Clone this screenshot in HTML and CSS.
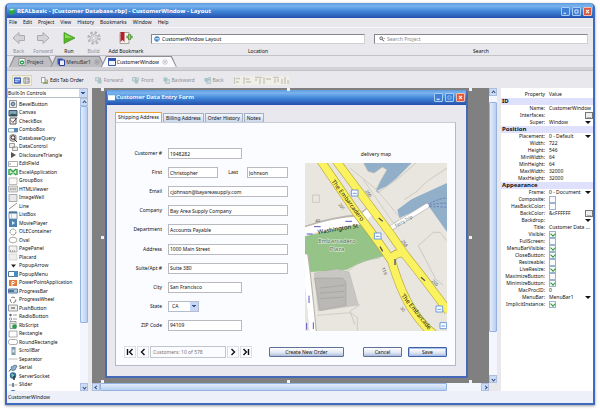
FILE: index.html
```html
<!DOCTYPE html>
<html lang="en">
<head>
    <meta charset="UTF-8">
    <meta name="viewport" content="width=device-width, initial-scale=1.0">
    <title>REALbasic - [Customer Database.rbp] - CustomerWindow - Layout</title>
    <link rel="stylesheet" href="styles.css">
</head>
<body>
<div class="app">
    <header class="titlebar main-title">
        <svg class="title-icon" viewBox="0 0 8 8"><path d="M1 1.500 5 .5 7.500 2v4.500L3.500 7.800 1 6z" fill="#28a745"/><path d="M1 1.500 5 .5 7.500 2 3.500 3z" fill="#b5f0b0"/></svg>
        <h1>REALbasic - [Customer Database.rbp] - CustomerWindow - Layout</h1>
        <div class="win-buttons">
            <button aria-label="Minimize"><svg viewBox="0 0 9 9"><path d="M2 6h3v1.500H2z" fill="#fff"/></svg></button>
            <button aria-label="Maximize"><svg viewBox="0 0 9 9"><path d="M2.500 2.500h4v4h-4z" fill="none" stroke="#fff"/></svg></button>
            <button class="close" aria-label="Close"><svg viewBox="0 0 9 9"><path d="m2.500 2.500 4 4m0-4-4 4" stroke="#fff" stroke-width="1.300"/></svg></button>
        </div>
    </header>

    <nav class="menubar">
        <button>File</button><button>Edit</button><button>Project</button><button>View</button><button>History</button><button>Bookmarks</button><button>Window</button><button>Help</button>
    </nav>

    <div class="toolbar">
        <button class="tool back off"><svg viewBox="0 0 14 14"><path d="M1 7 7 1.500v3h5.500v5H7v3z" fill="#d3d3d8" stroke="#aaaab0"/></svg>Back</button>
        <button class="tool forward off"><svg viewBox="0 0 14 14"><path d="m13 7-6-5.500v3H1.500v5H7v3z" fill="#d3d3d8" stroke="#aaaab0"/></svg>Forward</button>
        <button class="tool run"><svg viewBox="0 0 14 14"><path d="M2 1.500 13 7 2 12.500z" fill="#58b82c" stroke="#3b8f1a" stroke-width=".7"/><path d="M3 3 10 6.700 3 7z" fill="#8cdc55"/></svg>Run</button>
        <button class="tool build off"><svg viewBox="0 0 14 14"><circle cx="7" cy="7" r="5.500" fill="none" stroke="#b4b4ba" stroke-width="2.400" stroke-dasharray="2.400 1.900"/><circle cx="7" cy="7" r="3.500" fill="#e4e4e8" stroke="#b4b4ba"/><circle cx="7" cy="7" r="1.500" fill="#fff" stroke="#b4b4ba" stroke-width=".7"/></svg>Build</button>
        <button class="tool bookmark"><svg viewBox="0 0 14 14"><path d="M1 1.500h9v11H1z" fill="#f5f3ee" stroke="#8c8378" stroke-width=".7"/><path d="M1.500 1h4v10l-2-2-2 2z" fill="#b3202a"/><path d="M10.500 3v6m-3-3h6" stroke="#3c7d24" stroke-width="2.400"/><path d="M10.500 3.500v5M8 6h5" stroke="#9ada64"/></svg>Add Bookmark</button>
        <div class="field-group">
            <div class="box"><svg viewBox="0 0 8 8"><circle cx="4" cy="4" r="3.300" fill="#3f8bd0" stroke="#2864a4" stroke-width=".6"/><path d="M1.500 3h5v1.200h-5zM4.500 5h2l-1 1.500z" fill="#e8f4ff"/></svg><input id="location" type="text" value="CustomerWindow Layout"></div>
            <label for="location">Location</label>
        </div>
        <div class="field-group">
            <div class="box search"><svg viewBox="0 0 8 8"><circle cx="3" cy="3" r="2" fill="#ddd" stroke="#555"/><path d="m4.500 4.500 2 2.500" stroke="#444" stroke-width="1.300"/><path d="M6 2.500h2L7 4z" fill="#666"/></svg><input id="search" type="text" placeholder="Search Project"></div>
            <label for="search">Search</label>
        </div>
    </div>

    <div class="tabs">
        <button class="tab project"><span><svg viewBox="0 0 8 8"><path d="M1 .5h6v7H1z" fill="#fff" stroke="#666" stroke-width=".6"/><circle cx="4" cy="4.500" r="2.300" fill="#2fa853"/><path d="M3 4.500h2" stroke="#fff"/></svg>Project</span></button>
        <button class="tab menu"><span><svg viewBox="0 0 8 8"><path d="M.5.5h5v6h-5z" fill="#3955b8"/><path d="M2.500 2h5v5.500h-5z" fill="#eef" stroke="#2540a0"/></svg>MenuBar1<svg class="x" viewBox="0 0 8 8"><circle cx="4" cy="4" r="3" fill="none" stroke="#888" stroke-width=".7"/><path d="m3 3 2 2m0-2L3 5" stroke="#777" stroke-width=".7"/></svg></span></button>
        <button class="tab active"><span><svg viewBox="0 0 8 8"><path d="M.5.5h7v7h-7z" fill="#f2f6ff" stroke="#3955b0"/><path d="M0 0h8v3H0z" fill="#3355b5"/></svg>CustomerWindow<svg class="x" viewBox="0 0 8 8"><circle cx="4" cy="4" r="3" fill="none" stroke="#999" stroke-width=".7"/><path d="m3 3 2 2m0-2L3 5" stroke="#888" stroke-width=".7"/></svg></span></button>
    </div>

    <div class="toolrow">
        <div class="modes">
            <button class="on" aria-label="Layout view"><svg viewBox="0 0 8 8"><path d="M.5 1h7v6h-7z" fill="#5d86dd" stroke="#2346a2"/><path d="M1 3h6M1 5h3" stroke="#fff" stroke-width=".8"/></svg></button>
            <button aria-label="Code view"><svg viewBox="0 0 8 8"><path d="M1 1h6v6H1z" fill="#eee" stroke="#666" stroke-width=".8"/><path d="M3 1v6M4 3h3M4 5h3" stroke="#777" stroke-width=".7"/></svg></button>
        </div>
        <button class="act edit"><svg viewBox="0 0 8 8"><path d="M.5.5h4v6h-4zM4.500 3.500h3v4h-5" fill="#fff" stroke="#777" stroke-width=".8"/><path d="M4 5h3v2H4z" fill="#7fa844"/></svg>Edit Tab Order</button>
        <button class="act off"><svg viewBox="0 0 8 8"><path d="M.5.5h4v4h-4z" fill="#cfdfe2" stroke="#9fb4ba" stroke-width=".7"/><path d="M3 3h4.500v4.500H3z" fill="#a8c4c8"/><path d="M6 .500v3M5 2h2" stroke="#9ab"/></svg>Forward</button>
        <button class="act off"><svg viewBox="0 0 8 8"><path d="M.5.5h4v4h-4zM4 1h3.500v3H4z" fill="#cfdfe2" stroke="#9fb4ba" stroke-width=".7"/><path d="M3 3h4v4.500H3z" fill="#a8c4c8"/></svg>Front</button>
        <button class="act off"><svg viewBox="0 0 8 8"><path d="M3 3h4.500v4.500H3z" fill="#cfdfe2" stroke="#9fb4ba" stroke-width=".7"/><path d="M.5.5h4.500v4.500H.5z" fill="#a8c4c8"/></svg>Backward</button>
        <button class="act off"><svg viewBox="0 0 8 8"><path d="M3 3h4.500v4.500H3zM5 .5h2.500V3H5z" fill="#cfdfe2" stroke="#9fb4ba" stroke-width=".7"/><path d="M.5 1H5v4.500H.5z" fill="#a8c4c8"/></svg>Back</button>
        <svg class="aligns" viewBox="0 0 56 9"><path d="M1.500 1v7M3 2.500h4M3 6h3M11 1v7M12.500 3h4M13 6h5M22 1.500h7M23 3v2M27 3v5M31 1v7M33 3h5M40 1.500h6M42 3v4M45 3v3M49 8V3M52 8V1M55 8V4" stroke="#c8c7bb" fill="none" stroke-width="1.400"/></svg>
    </div>

    <main class="main">
        <aside class="palette">
            <div class="combo"><select aria-label="Control set"><option>Built-In Controls</option></select></div>
            <div class="list-wrap">
            <ul class="controls">
                <li><svg viewBox="0 0 10 8"><path d="M1.500.5h7v7h-7z" fill="#eee" stroke="#999"/><circle cx="5" cy="4" r="1.800" fill="#8bb8d8" stroke="#567"/></svg>BevelButton</li>
                <li><svg viewBox="0 0 10 8"><path d="M1 1.500h8v5.500H1z" fill="#7fa6bd" stroke="#456"/><path d="m1 6.500 3-2 5 1v1.500H1z" fill="#355"/></svg>Canvas</li>
                <li><svg viewBox="0 0 10 8"><path d="M2 1h6v6H2z" fill="#fff" stroke="#555"/><path d="m3 3.500 2 2L9 .500" fill="none" stroke="#533"/></svg>CheckBox</li>
                <li><svg viewBox="0 0 10 8"><path d="M.5 2.500h9v3.500h-9z" fill="#f4f8ff" stroke="#8aa"/><path d="M6 2h4v4H6z" fill="#5b88b8"/></svg>ComboBox</li>
                <li><svg viewBox="0 0 10 8"><path d="M2 1.500q3-2 6 0v5q-3 2-6 0z" fill="#ccc" stroke="#666" stroke-width=".7"/><circle cx="5" cy="3.500" r="1.800" fill="#fff" stroke="#433"/><path d="m6 5 3 3" stroke="#433"/></svg>DatabaseQuery</li>
                <li><svg viewBox="0 0 10 8"><path d="M1.500.5h5v4h-5zM4.500 4h5v3.500h-5z" fill="#eee" stroke="#888" stroke-width=".8"/></svg>DataControl</li>
                <li><svg viewBox="0 0 10 8"><path d="m3 1 5 3-5 3z" fill="#555"/></svg>DisclosureTriangle</li>
                <li><svg viewBox="0 0 10 8"><path d="M.5 1.500h9v5h-9z" fill="#fff" stroke="#999" stroke-width=".8"/><path d="M2 3v2" stroke="#777" stroke-width=".7"/></svg>EditField</li>
                <li><svg viewBox="0 0 10 8"><path d="M1 1h8v6H1z" fill="#d8f0d8"/><path d="m2 1 6 6m0-6L2 7M1 1v6M9 1v6" stroke="#36a04a" stroke-width="1.400"/></svg>ExcelApplication</li>
                <li><svg viewBox="0 0 10 8"><path d="M1 1h8v6.500H1z" fill="#fafafa" stroke="#aaa" stroke-width=".8"/></svg>GroupBox</li>
                <li><svg viewBox="0 0 10 8"><path d="M.5 1h9v6h-9z" fill="#ddd" stroke="#aaa" stroke-width=".8"/><path d="M2 4h6" stroke="#777" stroke-dasharray="1 .6"/></svg>HTMLViewer</li>
                <li><svg viewBox="0 0 10 8"><path d="M1 .5h8v7H1z" fill="#e8e8ea" stroke="#999" stroke-width=".8"/></svg>ImageWell</li>
                <li><svg viewBox="0 0 10 8"><path d="m1 7 8-6" stroke="#777" stroke-width=".8"/></svg>Line</li>
                <li><svg viewBox="0 0 10 8"><path d="M1 1h8v7H1z" fill="#f5f8fa" stroke="#789" stroke-width=".8"/><path d="M1 .5h8v2H1z" fill="#47789c"/><path d="M3.500 3v5" stroke="#abc" stroke-width=".7"/></svg>ListBox</li>
                <li><svg viewBox="0 0 10 8"><path d="M1 0h8v8H1z" fill="#4d83ae"/><path d="m4 2 3 2-3 2z" fill="#d8efff"/></svg>MoviePlayer</li>
                <li><svg viewBox="0 0 10 8"><circle cx="5" cy="4" r="3" fill="#fff" stroke="#888" stroke-dasharray="2 .6"/></svg>OLEContainer</li>
                <li><svg viewBox="0 0 10 8"><ellipse cx="5" cy="4" rx="4" ry="2.800" fill="#fff" stroke="#888" stroke-width=".7"/></svg>Oval</li>
                <li><svg viewBox="0 0 10 8"><path d="M1 1h8v6H1z" fill="#f2f2f2" stroke="#999" stroke-width=".7"/><path d="M2 6h6" stroke="#666" stroke-dasharray="1 1"/></svg>PagePanel</li>
                <li><svg viewBox="0 0 10 8"><path d="M1 1h8v6H1z" fill="#eee" stroke="#ccc" stroke-width=".7"/></svg>Placard</li>
                <li><svg viewBox="0 0 10 8"><path d="M3 2.500h5L5.500 5.500z" fill="#222"/></svg>PopupArrow</li>
                <li><svg viewBox="0 0 10 8"><path d="M.5 1.500h9v5h-9z" fill="#fff" stroke="#578"/><path d="M6 1h4v6H6z" fill="#478bc4"/></svg>PopupMenu</li>
                <li><svg viewBox="0 0 10 8"><path d="M1 1h8v6H1z" fill="#e57a38"/><path d="M4 7V2.500h2q1.500 1 0 2H4" fill="none" stroke="#fff"/></svg>PowerPointApplication</li>
                <li><svg viewBox="0 0 10 8"><path d="M.5 2h9v4h-9z" fill="#a8cce0" stroke="#679"/><path d="M1 4h5" stroke="#47789c" stroke-width="2"/></svg>ProgressBar</li>
                <li><svg viewBox="0 0 10 8"><circle cx="5" cy="4" r="2.800" fill="none" stroke="#777" stroke-dasharray="4 1.500"/></svg>ProgressWheel</li>
                <li><svg viewBox="0 0 10 8"><path d="M.5 1h9v6h-9z" fill="#eee" stroke="#888" stroke-width=".8"/><path d="M3 3h4v2H3z" fill="#999"/></svg>PushButton</li>
                <li><svg viewBox="0 0 10 8"><circle cx="2.500" cy="2" r="1.200" fill="#567"/><circle cx="2.500" cy="6" r="1.200" fill="#fff" stroke="#567" stroke-width=".6"/><path d="M5 2h4M5 6h4" stroke="#888" stroke-width=".8"/></svg>RadioButton</li>
                <li><svg viewBox="0 0 10 8"><path d="M2 .5h6v7H2z" fill="#eee" stroke="#777" stroke-width=".7"/><circle cx="6.500" cy="5.500" r="2.300" fill="#2c9b50"/><path d="M3 2.500h4" stroke="#888" stroke-width=".6"/></svg>RbScript</li>
                <li><svg viewBox="0 0 10 8"><path d="M1 1h8v6H1z" fill="#fff" stroke="#888" stroke-width=".7"/></svg>Rectangle</li>
                <li><svg viewBox="0 0 10 8"><rect x=".5" y="1.500" width="9" height="5" rx="2" fill="#fff" stroke="#888" stroke-width=".7"/></svg>RoundRectangle</li>
                <li><svg viewBox="0 0 10 8"><path d="M3.500 0h4v8h-4z" fill="#7d98a8"/><path d="M4.500 2.500h2v3h-2z" fill="#dceaf2"/></svg>ScrollBar</li>
                <li><svg viewBox="0 0 10 8"><path d="M.5 4h9" stroke="#aaa" stroke-width=".8"/></svg>Separator</li>
                <li><svg viewBox="0 0 10 8"><path d="M1 7.500 3 5" stroke="#456"/><path d="m3 3 4-2 2 1-2 4-3 .5z" fill="#8fb2cc" stroke="#467" stroke-width=".7"/></svg>Serial</li>
                <li><svg viewBox="0 0 10 8"><circle cx="5" cy="3.500" r="3.200" fill="#2f6f9e"/><path d="M3 2q2-1 3 1t-2 2" fill="#7fc0a0"/><path d="M6 4v4" stroke="#333" stroke-width="1.500"/></svg>ServerSocket</li>
                <li><svg viewBox="0 0 10 8"><path d="M.5 4h9" stroke="#999" stroke-width=".8"/><path d="M4 2h2v4H4z" fill="#789"/></svg>Slider</li>
                <li><svg viewBox="0 0 10 8"><circle cx="5" cy="4" r="3" fill="#3c62d0"/></svg></li>
            </ul>
            <div class="vscroll left"><button aria-label="Up"><i class="up"></i></button><div class="thumb"></div><button aria-label="Down"><i></i></button></div>
            </div>
        </aside>

        <section class="editor">
            <div class="canvas">
                <div class="form-window">
                    <div class="titlebar">
                        <svg class="title-icon" viewBox="0 0 8 8"><path d="M0 1.500h8v5.500H0z" fill="#fff"/></svg>
                        <h2>Customer Data Entry Form</h2>
                        <div class="win-buttons">
                            <button aria-label="Minimize"><svg viewBox="0 0 9 9"><path d="M2 6h4v1.500H2z" fill="#fff"/></svg></button>
                            <button aria-label="Maximize"><svg viewBox="0 0 9 9"><path d="M2.500 2.500h4v4h-4z" fill="none" stroke="#9cc4f5"/></svg></button>
                            <button class="close" aria-label="Close"><svg viewBox="0 0 9 9"><path d="m2.500 2.500 4 4m0-4-4 4" stroke="#fff" stroke-width="1.300"/></svg></button>
                        </div>
                    </div>
                    <div class="form-body">
                        <div class="form-tabs">
                            <button class="active">Shipping Address</button><button>Billing Address</button><button>Order History</button><button>Notes</button>
                        </div>
                        <form class="panel">
                            <div class="columns">
                                <div class="fields">
                                    <div class="row"><label for="num">Customer #</label><input class="mid" id="num" type="text" value="1948282"></div>
                                    <div class="row"><label for="first">First</label><input class="short" id="first" type="text" value="Christopher"><label class="last" for="last">Last</label><input id="last" type="text" value="Johnson"></div>
                                    <div class="row"><label for="email">Email</label><input id="email" type="text" value="cjohnson@bayareasupply.com"></div>
                                    <div class="row"><label for="company">Company</label><input id="company" type="text" value="Bay Area Supply Company"></div>
                                    <div class="row"><label for="dept">Department</label><input id="dept" type="text" value="Accounts Payable"></div>
                                    <div class="row"><label for="address">Address</label><input id="address" type="text" value="1000 Main Street"></div>
                                    <div class="row"><label for="suite">Suite/Apt #</label><input id="suite" type="text" value="Suite 380"></div>
                                    <div class="row"><label for="city">City</label><input class="mid" id="city" type="text" value="San Francisco"></div>
                                    <div class="row"><label for="state">State</label><div class="combo state"><select id="state"><option>CA</option></select></div></div>
                                    <div class="row"><label for="zip">ZIP Code</label><input class="mid" id="zip" type="text" value="94109"></div>
                                </div>
                                <figure class="map">
                                    <figcaption>delivery map</figcaption>
                                    <svg viewBox="15 55 426 504">
                                        <path d="M15 55h426v504H15z" fill="#e9e6df"/>
                                        <path d="M191 55 204 80l18 5 25-18 14 8-20 35-13 30 7 5 55-45 45-45z" fill="#92afc9"/>
                                        <path d="M441 85 292 195l6 25 86-38 57 80z" fill="#92afc9"/>
                                        <path d="m408 55-178 83 8 6 40-22 100-67zm33 20-128 90 5 6 123-56z" fill="#e9e6df"/>
                                        <path d="M191 55 204 80l18 5 25-18 14 8-20 35-13 25 10 6 60-43 50-43M441 70l-60 40-30 30-38 25" fill="none" stroke="#bdb9b2" stroke-width="2"/>
                                        <path d="m150 70 80 65 75 90-25 10-90-130" fill="none" stroke="#c4c0b8" stroke-width="2"/>
                                        <path d="M15 275 190 235l60 100q-65 15-110 40L30 382 15 350z" fill="#95c388"/>
                                        <path d="M15 258q85-30 165-35l35-28" fill="none" stroke="#bbb5ad" stroke-width="28"/>
                                        <path d="M12 262q85-30 168-35l35-30" fill="none" stroke="#fff" stroke-width="25"/>
                                        <path d="m270 252 110-68" stroke="#b8b4ad" stroke-width="16" stroke-linecap="round"/>
                                        <path d="m268 253 112-69" stroke="#fff" stroke-width="13" stroke-linecap="round"/>
                                        <path d="M15 330q10 80 25 235" fill="none" stroke="#b8b4ad" stroke-width="22"/>
                                        <path d="M12 330q12 80 26 235" fill="none" stroke="#fff" stroke-width="19"/>
                                        <path d="M388 178q30-18 53-18M388 182q30-8 53-6M388 186q30 0 53 2" fill="none" stroke="#5965b8" stroke-width="2" stroke-dasharray="7 4"/>
                                        <path d="m355 303 45-40h20l20 25M355 303l52 100 22 18M38 151h20v22H38zM130 390l50-40 60-10M180 480l-30 20 15 40" fill="none" stroke="#bdb9b2" stroke-width="2"/>
                                        <path d="m43 385 70-12 35 10 27 98-120 18z" fill="#c9c7c4" stroke="#aaa8a4"/>
                                        <path d="M43 400h85l10 12v70l-78 15z" fill="#b9b8b5" stroke="#908e8a"/>
                                        <path d="m60 430 73-8M60 445l73-5M60 462l73-5" stroke="#a19f9b" stroke-width="2"/>
                                        <path d="m52 512 100-8 20 15v40" fill="none" stroke="#c4c0b8" stroke-width="2"/>
                                        <g fill="none" stroke="#b9a846" stroke-width="26"><path d="M62 48 170 205q70 90 105 145 30 100 65 150t62 68"/><path d="M108 48 270 265l45 65q60 75 130 170M275 345q5-22 42-20"/></g>
                                        <g fill="none" stroke="#faf25e" stroke-width="22"><path d="M62 48 170 205q70 90 105 145 30 100 65 150t62 68"/><path d="M108 48 270 265l45 65q60 75 130 170M275 345q5-22 42-20"/></g>
                                        <g fill="#fff" stroke="#6b9bd8" stroke-width="3"><path d="M154 136h20v18h-20zM223 265h20v18h-20zM408 484h20v18h-20zM420 534h20v18h-20z"/><path d="M158 146h12M227 275h12M412 494h12M424 544h12" /></g>
                                        <path d="m248 230-12-10m12 100-8-14m45 55v-18m90 65-12-10" stroke="#555" stroke-width="4"/>
                                        <path d="M62 246H42m114-16h-20M20 268h18M27 475v-22m13 100v-20M20 555v-20" stroke="#5b55c8" stroke-width="3"/>
                                        <g class="road"><text transform="translate(94 111) rotate(53)">The Embarcadero</text><text transform="translate(303 454) rotate(51)">The Embarcade</text><text transform="translate(54 268) rotate(-9)">Washington St</text></g>
                                        <g class="num"><text transform="translate(115 180) rotate(53)">201</text><text transform="translate(195 140) rotate(53)">200</text><text transform="translate(303 290) rotate(53)">258</text><text transform="translate(394 410) rotate(45)">200</text><text transform="translate(245 370) rotate(70)">119</text><text transform="translate(300 490) rotate(55)">30</text><text transform="translate(288 248) rotate(-30)">Ferry Trip</text><text x="46" y="232">40</text></g>
                                        <g class="place"><text x="111" y="294">Embarcadero</text><text x="111" y="318">Plaza</text></g>
                                    </svg>
                                </figure>
                            </div>
                            <div class="bottom">
                                <div class="pager">
                                    <button type="button" aria-label="First record"><svg viewBox="0 0 8 8"><path d="M1.500 1v6M6.500 1l-3 3 3 3" fill="none" stroke="#111" stroke-width="1.400"/></svg></button>
                                    <button type="button" aria-label="Previous record"><svg viewBox="0 0 8 8"><path d="m5.500 1-3 3 3 3" fill="none" stroke="#111" stroke-width="1.400"/></svg></button>
                                    <output>Customers: 10 of 578</output>
                                    <button type="button" aria-label="Next record"><svg viewBox="0 0 8 8"><path d="m2.500 1 3 3-3 3" fill="none" stroke="#111" stroke-width="1.400"/></svg></button>
                                    <button type="button" aria-label="Last record"><svg viewBox="0 0 8 8"><path d="m1.500 1 3 3-3 3M6.500 1v6" fill="none" stroke="#111" stroke-width="1.400"/></svg></button>
                                </div>
                                <button type="button" class="btn wide">Create New Order</button>
                                <button type="button" class="btn">Cancel</button>
                                <button type="button" class="btn default">Save</button>
                            </div>
                        </form>
                    </div>
                </div>
                <!-- selection handles -->
                <b class="handle t l"></b><b class="handle t c"></b><b class="handle t r"></b>
                <b class="handle m l"></b><b class="handle m r"></b>
                <b class="handle b l"></b><b class="handle b c"></b><b class="handle b r"></b>
            </div>
            <div class="vscroll"><button aria-label="Scroll up"><i class="up"></i></button><div class="thumb"></div><button aria-label="Scroll down"><i></i></button></div>
            <div class="hscroll"><button aria-label="Scroll left"><i class="lt"></i></button><div class="thumb"></div><button aria-label="Scroll right"><i class="rt"></i></button></div>
        </section>

        <aside class="props">
            <table>
                <tr><th>Property</th><td>Value</td><td></td></tr>
                <tr class="group"><th colspan="3">ID</th></tr>
                <tr><th>Name:</th><td colspan="2">CustomerWindow</td></tr>
                <tr><th>Interfaces:</th><td></td><td><button class="dots">...</button></td></tr>
                <tr><th>Super:</th><td>Window</td><td><i></i></td></tr>
                <tr class="group"><th colspan="3">Position</th></tr>
                <tr><th>Placement:</th><td>0 - Default</td><td><i></i></td></tr>
                <tr><th>Width:</th><td>722</td><td></td></tr>
                <tr><th>Height:</th><td>546</td><td></td></tr>
                <tr><th>MinWidth:</th><td>64</td><td></td></tr>
                <tr><th>MinHeight:</th><td>64</td><td></td></tr>
                <tr><th>MaxWidth:</th><td>32000</td><td></td></tr>
                <tr><th>MaxHeight:</th><td>32000</td><td></td></tr>
                <tr class="group"><th colspan="3">Appearance</th></tr>
                <tr><th>Frame:</th><td>0 - Document</td><td><i></i></td></tr>
                <tr><th><label for="p1">Composite:</label></th><td><input type="checkbox" id="p1"></td><td></td></tr>
                <tr><th><label for="p2">HasBackColor:</label></th><td><input type="checkbox" id="p2"></td><td></td></tr>
                <tr><th>BackColor:</th><td>&amp;cFFFFFF</td><td><button class="dots">...</button></td></tr>
                <tr><th>Backdrop:</th><td></td><td><i></i></td></tr>
                <tr><th>Title:</th><td colspan="2">Customer Data ...</td></tr>
                <tr><th><label for="p3">Visible:</label></th><td><input type="checkbox" id="p3" checked></td><td></td></tr>
                <tr><th><label for="p4">FullScreen:</label></th><td><input type="checkbox" id="p4"></td><td></td></tr>
                <tr><th><label for="p5">MenuBarVisible:</label></th><td><input type="checkbox" id="p5" checked></td><td></td></tr>
                <tr><th><label for="p6">CloseButton:</label></th><td><input type="checkbox" id="p6" checked></td><td></td></tr>
                <tr><th><label for="p7">Resizeable:</label></th><td><input type="checkbox" id="p7"></td><td></td></tr>
                <tr><th><label for="p8">LiveResize:</label></th><td><input type="checkbox" id="p8" checked></td><td></td></tr>
                <tr><th><label for="p9">MaximizeButton:</label></th><td><input type="checkbox" id="p9"></td><td></td></tr>
                <tr><th><label for="p10">MinimizeButton:</label></th><td><input type="checkbox" id="p10" checked></td><td></td></tr>
                <tr><th>MacProcID:</th><td>0</td><td></td></tr>
                <tr><th>MenuBar:</th><td>MenuBar1</td><td><i></i></td></tr>
                <tr><th><label for="p11">ImplicitInstance:</label></th><td><input type="checkbox" id="p11" checked></td><td></td></tr>
            </table>
        </aside>
    </main>

    <footer class="status">CustomerWindow</footer>
</div>
</body>
</html>
```
FILE: styles.css
```css
* {
    box-sizing: border-box;
}

body {
    margin: 0;
    padding: 3px 5px 6px;
    height: 100vh;
    background: #fff;
    font-family: "Noto Sans", "Open Sans", sans-serif;
    font-size: 5px;
    line-height: 7px;
    color: #111;
}

button, input, select {
    font: inherit;
    color: inherit;
    margin: 0;
    padding: 0;
    border: 0;
    border-radius: 0;
    background: none;
    outline: none;
    min-width: 0;
}

svg {
    display: block;
    flex: none;
}

/* Main window */
.app {
    display: flex;
    flex-direction: column;
    height: 100%;
    background: #e9e8ed;
    border: 2px solid #3f6ac0;
    border-top: 0;
    border-radius: 5px 5px 0 0;
    box-shadow: 0 1px 3px rgba(0, 0, 0, 0.4);
    overflow: hidden;
}

.titlebar {
    display: flex;
    align-items: center;
    gap: 1px;
    height: 15px;
    flex: none;
    padding: 0 1px;
    background: linear-gradient(#5e9ade, #7ab4ee 20%, #3f85d8 55%, #2450ae);
    color: #fff;
}

.titlebar h1,
.titlebar h2 {
    flex: 1;
    margin: 0;
    font-size: 6px;
    font-weight: 600;
    line-height: 9px;
    white-space: nowrap;
}

.main-title {
    gap: 2px;
    padding-top: 2px;
}

.titlebar h1 {
    font-weight: bold;
}

.title-icon {
    width: 7px;
    height: 7px;
}

.win-buttons {
    display: flex;
    gap: 2px;
}

.win-buttons button {
    width: 9px;
    height: 9px;
    background: #3f7fd6;
    border: 1px solid #a9cbf3;
    border-radius: 1px;
}

.win-buttons .close {
    background: #dd5a3c;
    border-color: #f3c0b0;
}

.menubar {
    display: flex;
    gap: 6px;
    height: 10px;
    flex: none;
    padding: 0 2px;
    border-bottom: 1px solid #f8f8fa;
}

/* Toolbar */
.toolbar {
    display: flex;
    height: 28px;
    flex: none;
    padding: 3px 5px 0 0;
    border-bottom: 1px solid #c2c2c8;
}

.tool {
    display: flex;
    flex-direction: column;
    align-items: center;
    gap: 3px;
    white-space: nowrap;
}

.tool svg {
    width: 14px;
    height: 14px;
}

.off {
    color: #8e8e94;
}

.back, .build {
    width: 23px;
}

.forward, .run {
    width: 26px;
}

.bookmark {
    width: 42px;
    margin-right: 4px;
}

.field-group {
    flex: 1;
    padding-top: 3px;
    text-align: center;
}

.field-group + .field-group {
    margin-left: 9px;
}

.field-group label {
    display: block;
    margin-top: 4px;
}

.box {
    display: flex;
    align-items: center;
    gap: 2px;
    height: 10px;
    padding-left: 2px;
    background: #fff;
    border: 1px solid #cfcfd4;
    border-top-color: #85858b;
    border-left-color: #85858b;
}

.box svg {
    width: 6px;
    height: 6px;
}

.box.search {
    padding-left: 4px;
}

.box input {
    flex: 1;
    height: 8px;
}

.box input::placeholder {
    color: #888;
    opacity: 1;
}

/* Document tabs */
.tabs {
    display: flex;
    height: 14px;
    flex: none;
    padding-left: 2px;
    border-bottom: 3px solid #d3d3d7;
}

.tab {
    height: 11px;
    background: #8f8f96;
    clip-path: polygon(5px 0, calc(100% - 5px) 0, 100% 100%, 0 100%);
    padding: 1px 1px 0;
    margin-right: -4px;
}

.tab span {
    display: flex;
    align-items: center;
    gap: 1px;
    height: 10px;
    padding: 0 10px 0 8px;
    background: #bdbdc2;
    clip-path: polygon(5px 0, calc(100% - 5px) 0, 100% 100%, 0 100%);
    color: #333;
}

.tab svg {
    width: 8px;
    height: 8px;
}

.tab .x {
    width: 6px;
    height: 6px;
    margin-left: 2px;
}

.tab.menu span {
    padding: 0 4px 0 6px;
}

.tab.active span {
    background: #fbfbfd;
    color: #111;
    padding: 0 8px 0 6px;
}

.toolrow {
    display: flex;
    align-items: center;
    height: 18px;
    flex: none;
    padding: 1px 5px 0;
    border-top: 1px solid #c0c0c5;
}

.modes {
    display: flex;
    border: 1px solid #d8d4b8;
    background: #f3f1e4;
    margin-right: 9px;
}

.modes button {
    padding: 1px;
}

.modes svg {
    width: 7px;
    height: 7px;
}

.act {
    display: flex;
    align-items: center;
    gap: 2px;
    margin-right: 9px;
    white-space: nowrap;
}

.act svg {
    width: 7px;
    height: 7px;
}

.act.edit {
    margin-right: 11px;
}

.aligns {
    width: 56px;
    height: 9px;
    background: #f0efe8;
}

/* Three work areas */
.main {
    display: grid;
    grid-template-columns: 81px minmax(0, 1fr) 92px;
    column-gap: 4px;
    flex: 1;
    min-height: 0;
}

.palette {
    display: flex;
    flex-direction: column;
    min-height: 0;
    background: #fff;
}

.combo {
    position: relative;
    height: 10px;
    flex: none;
    border: 1px solid #b5bccb;
    background: #fff;
}

.combo select {
    display: block;
    width: 100%;
    height: 8px;
    appearance: none;
}

/* drop-down arrow over the select */
.combo::after {
    content: "";
    position: absolute;
    top: 0;
    right: 0;
    bottom: 0;
    width: 8px;
    pointer-events: none;
    background: linear-gradient(45deg, transparent 50%, #3a5590 50%) 2px 3px / 2px 2px no-repeat,
        linear-gradient(315deg, transparent 50%, #3a5590 50%) 4px 3px / 2px 2px no-repeat,
        #c6d8f5;
}

.list-wrap {
    display: flex;
    flex: 1;
    min-height: 0;
}

.controls {
    flex: 1;
    margin: 0;
    padding: 2px 0 0 1px;
    list-style: none;
    overflow: hidden;
}

.controls li {
    display: flex;
    align-items: center;
    gap: 1px;
    height: 8px;
    white-space: nowrap;
}

.controls li:nth-child(even) {
    height: 9px;
}

.controls svg {
    width: 10px;
    height: 8px;
}

/* Scroll bars */
.vscroll {
    display: flex;
    flex-direction: column;
    width: 8px;
    background: #f3f6fc;
}

.hscroll {
    display: flex;
    height: 8px;
    background: #f3f6fc;
}

.vscroll button,
.hscroll button {
    display: grid;
    place-items: center;
    width: 8px;
    height: 8px;
    flex: none;
    background: #cbdcf8;
    border: 1px solid #aebfdd;
}

.vscroll button i,
.hscroll button i {
    width: 3px;
    height: 3px;
    border: solid #34466e;
    border-width: 0 1px 1px 0;
    transform: rotate(45deg);
}

.vscroll button i.up {
    transform: rotate(225deg);
}

.hscroll button i.lt {
    transform: rotate(135deg);
}

.hscroll button i.rt {
    transform: rotate(-45deg);
}

.vscroll .thumb {
    flex: 1;
    margin: 6px 0 43px;
    border: 1px solid #94b3e0;
    border-radius: 1px;
    background: linear-gradient(90deg, #e2edfd, #b8cff2);
}

.vscroll.left .thumb {
    margin: 0 0 60px;
}

.hscroll .thumb {
    flex: 1;
    margin: 0 34px 0 0;
    border: 1px solid #94b3e0;
    border-radius: 1px;
    background: linear-gradient(#e2edfd, #b8cff2);
}

/* Layout editor */
.editor {
    display: grid;
    grid-template-columns: minmax(0, 1fr) 8px;
    grid-template-rows: minmax(0, 1fr) 8px;
    min-height: 0;
}

.canvas {
    position: relative;
    padding: 2px 21px 5px 13px;
    background: #808080;
}

.handle {
    position: absolute;
    width: 3px;
    height: 3px;
    background: #eef2fa;
}

.handle.t { top: 0; }
.handle.m { top: 50%; }
.handle.b { bottom: 0; }
.handle.l { left: 9px; }
.handle.c { left: 49%; }
.handle.r { right: 17px; }

.form-window {
    display: flex;
    flex-direction: column;
    height: 100%;
    background: #e9e8ee;
    border: 2px solid #4668b8;
    border-top: 0;
    border-radius: 4px 4px 0 0;
    overflow: hidden;
}

.form-body {
    display: flex;
    flex-direction: column;
    flex: 1;
    min-height: 0;
    padding: 7px 10px 10px 8px;
}

.form-tabs {
    display: flex;
    align-items: flex-end;
    gap: 1px;
    height: 10px;
    flex: none;
}

.form-tabs button {
    height: 9px;
    padding: 0 2px;
    background: linear-gradient(#f4f7fc, #c9d7ea);
    border: 1px solid #a3b0c4;
    border-bottom: 0;
    border-radius: 1px 1px 0 0;
    white-space: nowrap;
}

.form-tabs .active {
    height: 10px;
    background: #fbfcff;
    border-top: 1px solid #f0a12c;
}

.panel {
    display: flex;
    flex-direction: column;
    flex: 1;
    padding: 25px 8px 7px;
    background: #fbfcff;
    border: 1px solid #b4b8c8;
    border-top-color: #c8ccd8;
}

.columns {
    display: flex;
    justify-content: space-between;
}

.fields {
    display: flex;
    flex-direction: column;
    justify-content: space-between;
    width: 164px;
}

.row {
    display: flex;
    align-items: center;
    height: 11px;
}

.row label {
    width: 38px;
    margin-right: 6px;
    text-align: right;
}

.row .last {
    width: 20px;
    margin-right: 9px;
}

.row input {
    flex: 1;
    height: 11px;
    padding: 0 1px;
    border: 1px solid #b9bac0;
    background: #fff;
}

.row .mid {
    flex: none;
    width: 74px;
}

.row .short {
    flex: none;
    width: 50px;
}

.state {
    width: 31px;
    height: 11px;
}

.state select {
    height: 9px;
    padding-left: 3px;
}

.map {
    margin: 0;
    width: 142px;
    text-align: center;
}

.map figcaption {
    margin: 3px 0 5px;
}

.map svg {
    width: 100%;
}

.road {
    font-size: 18px;
    fill: #111;
}

.num {
    font-size: 13px;
    fill: #555;
}

.place {
    font-size: 18px;
    text-anchor: middle;
    fill: #4d6b50;
    stroke: #e4f0e0;
    stroke-width: 3px;
    paint-order: stroke;
}

.bottom {
    display: flex;
    align-items: center;
    margin-top: auto;
}

.pager {
    display: flex;
    gap: 1px;
    margin-right: auto;
}

.pager button {
    width: 12px;
    height: 12px;
    padding: 1px;
    border: 1px solid #dcdee6;
}

.pager output {
    width: 76px;
    height: 12px;
    padding: 2px;
    color: #777;
    border: 1px solid #c2c4cc;
    white-space: nowrap;
}

.btn {
    width: 39px;
    height: 10px;
    margin-left: 6px;
    border: 1px solid #5f7196;
    border-radius: 1px;
    background: linear-gradient(#fff, #dfe6f2 60%, #a9bbdc);
}

.btn.wide {
    width: 75px;
    margin-right: 13px;
}

.btn.default {
    border-color: #3d5fa5;
    box-shadow: inset 0 0 0 1px #a8c0ea;
}

/* Property list */
.props {
    background: #fff;
    padding-top: 3px;
    overflow: hidden;
}

.props table {
    width: 100%;
    table-layout: fixed;
    border-collapse: collapse;
}

.props th,
.props td {
    height: 7px;
    padding: 0;
    line-height: 7px;
    font-weight: normal;
    text-align: left;
    white-space: nowrap;
    vertical-align: middle;
}

.props th {
    width: 48px;
    padding-right: 4px;
    text-align: right;
}

.props td:nth-child(3) {
    width: 8px;
}

.props .group th {
    padding-left: 1px;
    text-align: left;
    font-size: 6px;
    font-weight: bold;
    background: #dfe0fb;
}

.props i {
    display: block;
    border: solid transparent;
    border-width: 3px 3px 0;
    border-top-color: #111;
    width: 0;
}

.props .dots {
    display: block;
    width: 8px;
    height: 7px;
    line-height: 4px;
    border: 1px solid #777;
    background: #eee;
}

.props input {
    display: block;
    position: relative;
    width: 7px;
    height: 7px;
    appearance: none;
    border: 1px solid #9bb3cc;
    background: #f8fafc;
}

/* tick mark */
.props input:checked::before {
    content: "";
    position: absolute;
    left: 1px;
    top: 0;
    width: 3px;
    height: 3px;
    border: solid #2b9a35;
    border-width: 0 1px 1px 0;
    transform: rotate(45deg);
}

.status {
    height: 12px;
    flex: none;
    padding: 3px 0 0 1px;
    background: #edf0f8;
}
```
